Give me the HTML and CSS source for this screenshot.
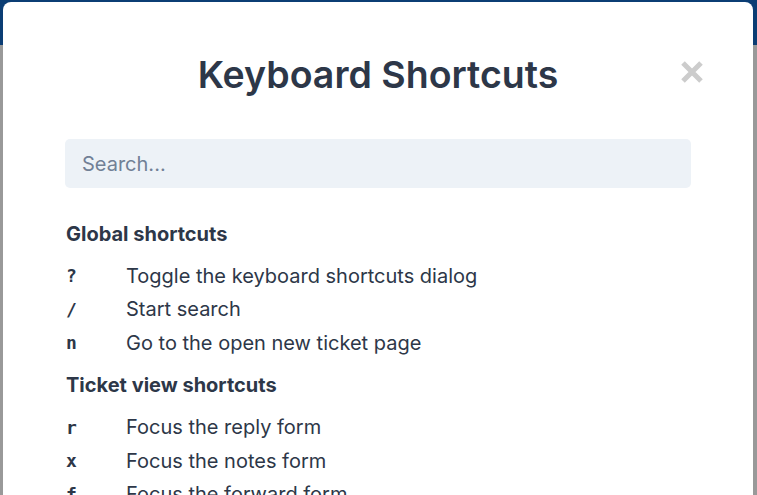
FILE: index.html
```html
<!DOCTYPE html>
<html lang="en">
<head>
<meta charset="utf-8">
<title>Keyboard Shortcuts</title>
<link rel="stylesheet" href="styles.css">
</head>
<body>
<div class="page">
  <div class="topbar"></div>
  <div class="overlay">
    <div class="modal">
      <div class="modal-head">
        <h1 class="title">Keyboard Shortcuts</h1>
        <svg class="close" width="24" height="24" viewBox="0 0 24 24" aria-label="Close"><path d="M3 3 L21 21 M21 3 L3 21" stroke="#cccccc" stroke-width="5" stroke-linecap="butt" fill="none"/></svg>
      </div>
      <div class="search">Search...</div>
      <h2 class="section">Global shortcuts</h2>
      <div class="row"><span class="key">?</span><span class="desc">Toggle the keyboard shortcuts dialog</span></div>
      <div class="row"><span class="key">/</span><span class="desc">Start search</span></div>
      <div class="row"><span class="key">n</span><span class="desc">Go to the open new ticket page</span></div>
      <h2 class="section">Ticket view shortcuts</h2>
      <div class="row"><span class="key">r</span><span class="desc">Focus the reply form</span></div>
      <div class="row"><span class="key">x</span><span class="desc">Focus the notes form</span></div>
      <div class="row"><span class="key">f</span><span class="desc">Focus the forward form</span></div>
    </div>
  </div>
</div>
</body>
</html>
```
FILE: styles.css
```css
html, body {
  margin: 0;
  padding: 0;
  height: 100%;
  overflow: hidden;
}
body {
  font-family: Inter, "Noto Sans", sans-serif;
  color: #2d3748;
}
.page {
  position: relative;
  height: 495px;
  background: #999999;
}
.topbar {
  height: 45px;
  background: #0b3d74;
}
.overlay {
  position: absolute;
  top: 0;
  left: 0;
  right: 0;
  bottom: 0;
  display: flex;
  justify-content: center;
  padding: 2px 4px 0 3px;
}
.modal {
  flex: 1;
  background: #fff;
  border-radius: 8px 8px 0 0;
  padding: 0 62px 0 62px;
}
.modal-head {
  position: relative;
  display: flex;
  justify-content: center;
  padding-top: 46px;
  padding-bottom: 37px;
}
.title {
  margin: 0;
  font-size: 37.5px;
  line-height: 54px;
  font-weight: 600;
  letter-spacing: 0;
}
.close {
  position: absolute;
  right: -13px;
  top: 58px;
}
.search {
  height: 49px;
  background: #edf2f7;
  border-radius: 5px;
  padding-left: 17px;
  display: flex;
  align-items: center;
  font-size: 20px;
  color: #718096;
}
.section {
  margin: 32px 0 11px 0;
  font-size: 20px;
  font-weight: 700;
  line-height: 28px;
  padding-left: 1px;
}
.row {
  display: flex;
  height: 33.5px;
  align-items: center;
}
.key {
  width: 60px;
  padding-left: 1px;
  font-family: "DejaVu Sans Mono", monospace;
  font-weight: 700;
  font-size: 18px;
}
.desc {
  font-size: 20px;
}
.row + .section {
  margin-top: 11px;
  margin-bottom: 12px;
}
```
